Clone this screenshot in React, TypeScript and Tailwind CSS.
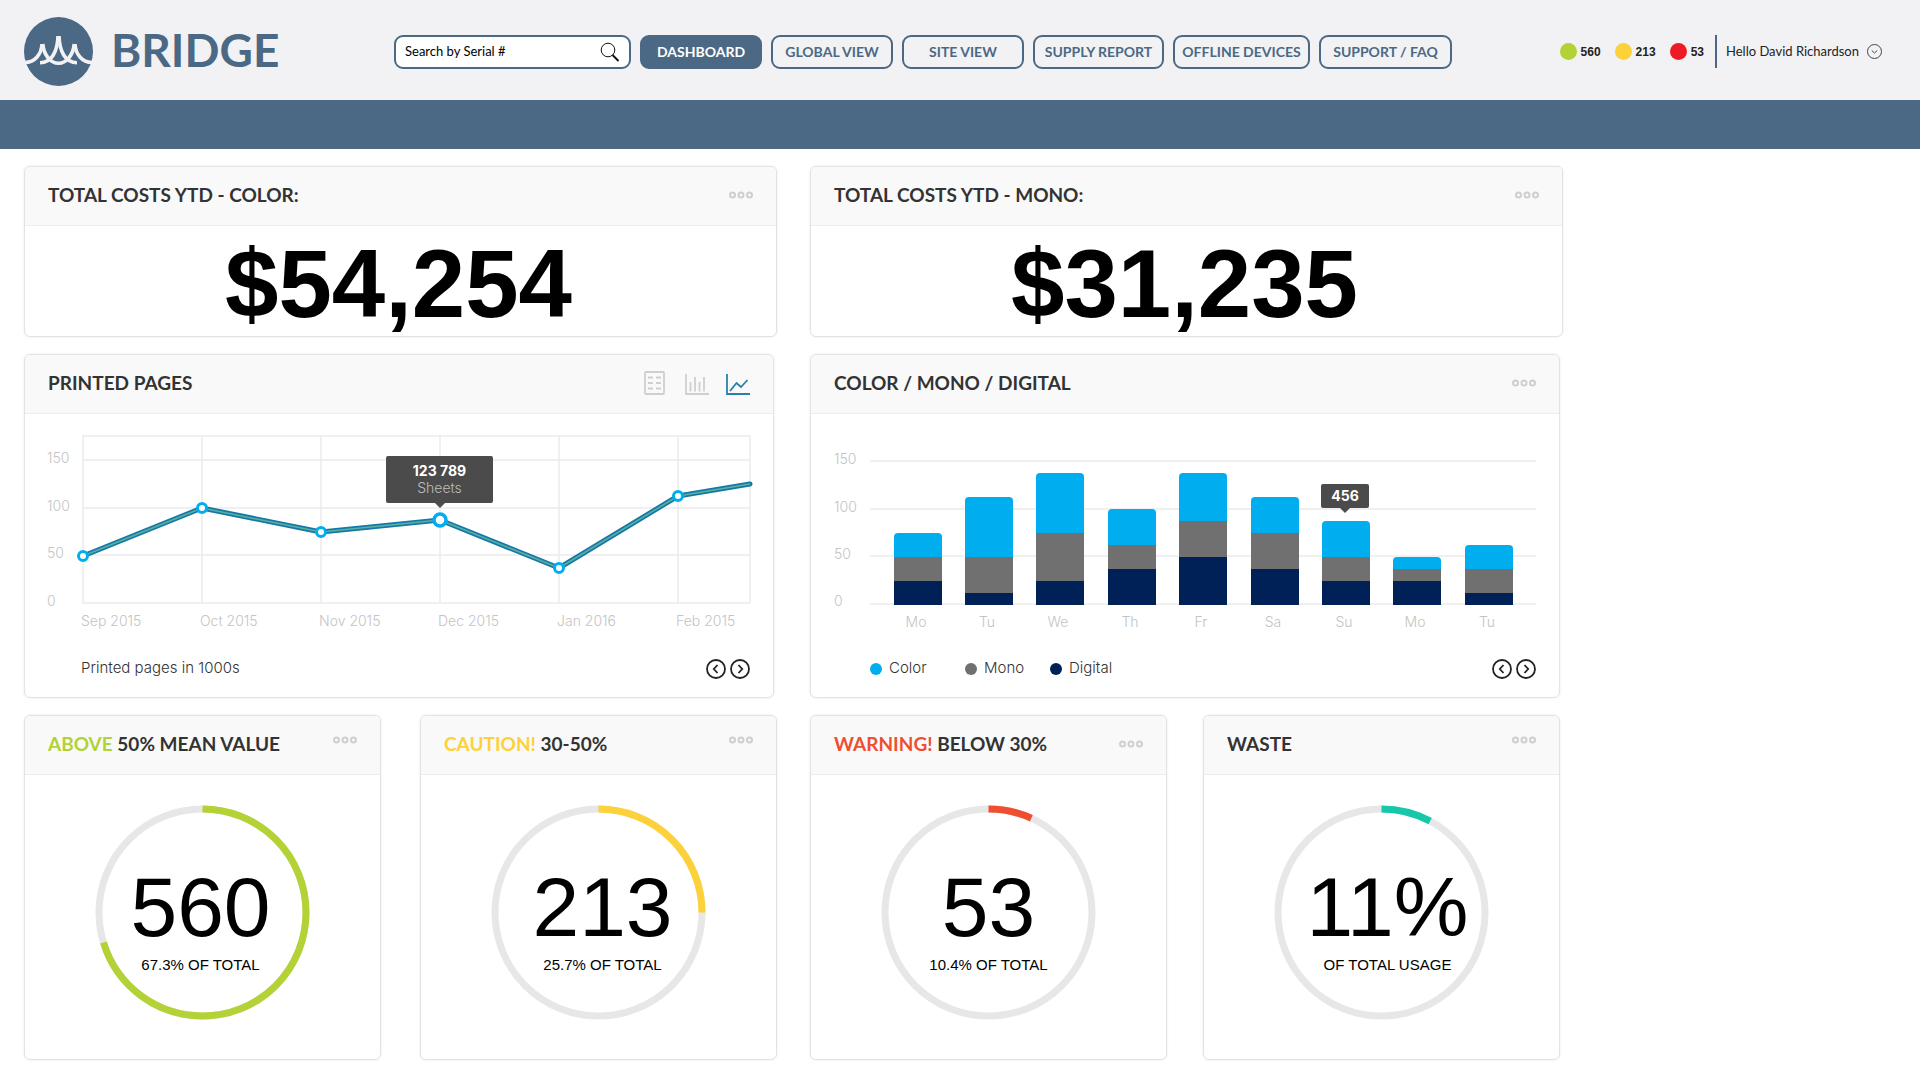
import React, { useState } from 'react'

const navItems = [
  { name: "DASHBOARD", width: "w-[122px]" },
  { name: "GLOBAL VIEW", width: "w-[122px]" },
  { name: "SITE VIEW", width: "w-[122px]" },
  { name: "SUPPLY REPORT", width: "w-[131px]" },
  { name: "OFFLINE DEVICES", width: "w-[137px]" },
  { name: "SUPPORT / FAQ", width: "w-[133px]" },
];

const statuses = [
  { value: "560", color: "bg-[#b2d235]" },
  { value: "213", color: "bg-[#fdd13a]" },
  { value: "53", color: "bg-[#ed1c24]" },
];

const points = [
  { x: 58, y: 142 },
  { x: 177, y: 94 },
  { x: 296, y: 118 },
  { x: 415, y: 106, active: true },
  { x: 534, y: 154 },
  { x: 653, y: 82 },
];

const months = ["Sep 2015", "Oct 2015", "Nov 2015", "Dec 2015", "Jan 2016", "Feb 2015"];

// each step is 12.5 on the axis
const bars = [
  { day: "Mo", digital: 2, mono: 2, color: 2 },
  { day: "Tu", digital: 1, mono: 3, color: 5 },
  { day: "We", digital: 2, mono: 4, color: 5 },
  { day: "Th", digital: 3, mono: 2, color: 3 },
  { day: "Fr", digital: 4, mono: 3, color: 4 },
  { day: "Sa", digital: 3, mono: 3, color: 3 },
  { day: "Su", digital: 2, mono: 2, color: 3 },
  { day: "Mo", digital: 2, mono: 1, color: 1 },
  { day: "Tu", digital: 1, mono: 2, color: 2 },
];

function Logo() {
  return (
    <svg width="69" height="69" viewBox="0 0 69 69" aria-hidden="true">
      <circle cx="34.5" cy="34.5" r="34.5" fill="#4b6984" />
      <g fill="none" stroke="#f2f2f4" strokeWidth="3.6">
        <path d="M18 27C17.5 37 11 45.5 1 45.5" />
        <path d="M18.8 27C19.5 37 26 46.3 34.5 46.3C43 46.3 49.5 37 50.2 27" />
        <path d="M34 19C33.5 34 28 45.7 16 45.7" />
        <path d="M35 19C35.5 34 41 45.7 53 45.7" />
        <path d="M51 27C51.5 37 58 45.5 68 45.5" />
      </g>
    </svg>
  )
}

function Dots({ raised }: { raised?: boolean }) {
  return (
    <button type="button" aria-label="More options" className={raised ? "pb-2 cursor-pointer" : "cursor-pointer"}>
      <svg width="24" height="8" viewBox="0 0 24 8" fill="none" stroke="#cfcfcf" strokeWidth="2">
        <circle cx="3.5" cy="4" r="2.5" />
        <circle cx="12" cy="4" r="2.5" />
        <circle cx="20.5" cy="4" r="2.5" />
      </svg>
    </button>
  )
}

function Card({ title, actions, className, children }: {
  title: React.ReactNode,
  actions: React.ReactNode,
  className?: string,
  children: React.ReactNode
}) {
  return (
    <section className={"rounded-md border border-[#e3e3e3] bg-white shadow-[0_0_3px_rgba(0,0,0,0.08)] overflow-hidden " + (className || "")}>
      <header className="h-[59px] flex items-center justify-between pl-[23px] pr-[23px] pb-[2px] bg-[#f9f9f9] border-b border-[#ededed]">
        <h2 className="font-['Lato',sans-serif] text-[19px] font-bold text-[#333]">{title}</h2>
        {actions}
      </header>
      {children}
    </section>
  )
}

function Pager() {
  return (
    <div className="flex gap-1">
      <button type="button" aria-label="Previous" className="cursor-pointer">
        <svg width="20" height="20" viewBox="0 0 20 20" fill="none" stroke="#222" strokeWidth="1.8">
          <circle cx="10" cy="10" r="9" />
          <path d="M11.5 6L7.8 10L11.5 14" />
        </svg>
      </button>
      <button type="button" aria-label="Next" className="cursor-pointer">
        <svg width="20" height="20" viewBox="0 0 20 20" fill="none" stroke="#222" strokeWidth="1.8">
          <circle cx="10" cy="10" r="9" />
          <path d="M8.5 6L12.2 10L8.5 14" />
        </svg>
      </button>
    </div>
  )
}

function ChartIcons() {
  return (
    <div className="flex items-end gap-[17px]">
      <button type="button" aria-label="Table" className="mr-[3px] cursor-pointer">
        <svg width="21" height="24" viewBox="0 0 21 24" fill="none" stroke="#cfcfcf" strokeWidth="1.8">
          <rect x="1" y="1" width="19" height="22" rx="1" />
          <path d="M4 6.5H9M12 6.5H17M4 12H9M12 12H17M4 17.5H9M12 17.5H17" />
        </svg>
      </button>
      <button type="button" aria-label="Bar chart" className="cursor-pointer">
        <svg width="24" height="21" viewBox="0 0 24 21" fill="none" stroke="#cfcfcf" strokeWidth="1.8">
          <path d="M1 0V20H24" />
          <path d="M5.5 8V17.5M10 3V17.5M14.5 8V17.5M19 3V17.5" />
        </svg>
      </button>
      <button type="button" aria-label="Line chart" className="cursor-pointer">
        <svg width="24" height="21" viewBox="0 0 24 21" fill="none" stroke="#2a80a8" strokeWidth="1.8">
          <path d="M1 0V20H24" />
          <path d="M4 17L10.5 9L15 13L21.5 6" />
        </svg>
      </button>
    </div>
  )
}

function LineChart() {
  const line = points.map((p) => p.x + "," + p.y).join(" ") + " 725,70";
  return (
    <svg viewBox="0 0 748 230" className="block w-full h-auto font-['Inter',sans-serif] text-[14px] font-light">
      <g stroke="#ebebeb" strokeWidth="1.5" fill="none">
        <rect x="58" y="22" width="667" height="167" />
        <path d="M58 46H725M58 94H725M58 141H725" />
        <path d="M177 22V189M296 22V189M415 22V189M534 22V189M653 22V189" />
      </g>
      <g fill="#c4c4c4">
        <text x="22" y="49">150</text>
        <text x="22" y="97">100</text>
        <text x="22" y="144">50</text>
        <text x="22" y="192">0</text>
        {months.map((m, i) => (
          <text key={m} x={56 + i * 119} y="212">{m}</text>
        ))}
      </g>
      <polyline points={line} fill="none" stroke="#1579a8" strokeWidth="5" strokeLinecap="round" strokeLinejoin="round" />
      <polyline points={line} fill="none" stroke="#5bb0a0" strokeWidth="1.5" strokeLinejoin="round" />
      {points.map((p) => (
        <circle key={p.x} cx={p.x} cy={p.y} r={p.active ? 6 : 4.5} fill="#fff" stroke="#00aeef" strokeWidth={p.active ? 3.5 : 3} />
      ))}
      <rect x="361" y="42" width="107" height="47" rx="2" fill="#4b4b4b" />
      <path d="M410 89H420L415 94Z" fill="#4b4b4b" />
      <text x="414.5" y="62" textAnchor="middle" fill="#fff" className="font-bold">123 789</text>
      <text x="414.5" y="79" textAnchor="middle" fill="#bdbdbd">Sheets</text>
    </svg>
  )
}

function BarChart() {
  const step = 12;
  const bottom = 191;
  return (
    <svg viewBox="0 0 748 230" className="block w-full h-auto font-['Inter',sans-serif] text-[14px] font-light">
      <path d="M59 47H725M59 95H725M59 142H725M59 190H725" stroke="#ebebeb" strokeWidth="1.5" />
      <g fill="#c4c4c4">
        <text x="23" y="50">150</text>
        <text x="23" y="98">100</text>
        <text x="23" y="145">50</text>
        <text x="23" y="192">0</text>
      </g>
      {bars.map((b, i) => {
        const x = Math.round(82.5 + i * 71.4);
        const digitalTop = bottom - b.digital * step;
        const monoTop = digitalTop - b.mono * step;
        const colorTop = monoTop - b.color * step;
        return (
          <g key={i}>
            <path d={`M${x} ${monoTop}V${colorTop + 4}q0 -4 4 -4h40q4 0 4 4V${monoTop}Z`} fill="#00aeef" />
            <rect x={x} y={monoTop} width="48" height={digitalTop - monoTop} fill="#707070" />
            <rect x={x} y={digitalTop} width="48" height={bottom - digitalTop} fill="#002157" />
            <text x={x + 22} y="213" textAnchor="middle" fill="#c4c4c4">{b.day}</text>
          </g>
        )
      })}
      <rect x="510" y="70" width="48" height="24" rx="2" fill="#4b4b4b" />
      <path d="M529 94H539L534 99Z" fill="#4b4b4b" />
      <text x="534" y="87" textAnchor="middle" fill="#fff" className="font-bold">456</text>
    </svg>
  )
}

function Gauge({ value, caption, percent, color, shift }: {
  value: string,
  caption: string,
  percent: number,
  color: string,
  shift?: string
}) {
  return (
    <div className="grid place-items-center pt-[30px] pb-[39px]">
      <svg width="215" height="215" viewBox="0 0 215 215" className="col-start-1 row-start-1" fill="none" strokeWidth="7">
        <circle cx="107.5" cy="107.5" r="103.5" stroke="#e7e7e7" />
        <circle cx="107.5" cy="107.5" r="103.5" stroke={color} pathLength="100" strokeDasharray={percent + " 100"} transform="rotate(-90 107.5 107.5)" />
      </svg>
      <div className={"col-start-1 row-start-1 text-center text-black font-['Liberation_Sans',Arial,sans-serif] pt-2 " + (shift || "")}>
        <p className="text-[84px] leading-[96px]">{value}</p>
        <p className="text-[15px] leading-5">{caption}</p>
      </div>
    </div>
  )
}

export default function App() {
  const [search, setSearch] = useState("");
  const [active, setActive] = useState("DASHBOARD");

  return (
    <div className="min-h-screen bg-white">
      <header className="h-[100px] pt-[3px] pl-6 pr-[38px] flex items-center bg-[#f2f2f4] font-['Lato',sans-serif]">
        <a href="#" className="w-[370px] shrink-0 flex items-center gap-[18px]">
          <Logo />
          <span className="pb-[3px] text-[46px] leading-[48px] font-bold text-[#4b6984]">BRIDGE</span>
        </a>
        <form className="shrink-0 w-[237px] h-[34px] flex items-center rounded-[9px] border-2 border-[#4b6984] bg-white px-[9px]" onSubmit={(e) => e.preventDefault()}>
          <input
            type="text"
            aria-label="Search by Serial #"
            placeholder="Search by Serial #"
            value={search}
            onChange={(e) => setSearch(e.target.value)}
            className="min-w-0 flex-1 text-[13px] outline-none placeholder:text-black"
          />
          <button type="submit" aria-label="Search" className="cursor-pointer">
            <svg width="20" height="20" viewBox="0 0 20 20" fill="none" stroke="#111">
              <circle cx="8" cy="8" r="6.8" />
              <path d="M12.5 13L18.5 19" strokeWidth="2" />
            </svg>
          </button>
        </form>
        <nav className="flex gap-[9px] ml-[9px]">
          {navItems.map((item) => (
            <a
              key={item.name}
              href="#"
              onClick={() => setActive(item.name)}
              className={"h-[34px] flex items-center justify-center whitespace-nowrap rounded-[9px] border-2 border-[#4b6984] text-[14px] font-bold " + item.width + (active === item.name ? " bg-[#4b6984] text-white" : " text-[#4b6984]")}
            >
              {item.name}
            </a>
          ))}
        </nav>
        <div className="ml-auto flex items-center">
          <ul className="flex items-center gap-[14px] font-['Liberation_Sans',Arial,sans-serif] text-[12px] font-bold text-[#222]">
            {statuses.map((s) => (
              <li key={s.value} className="flex items-center gap-1">
                <span className={"size-[17px] rounded-full " + s.color}></span>
                {s.value}
              </li>
            ))}
          </ul>
          <button type="button" className="ml-[11px] h-[33px] border-l-2 border-[#4b6984] pl-[9px] flex items-center gap-2 text-[13px] text-[#222] whitespace-nowrap cursor-pointer">
            Hello David Richardson
            <svg width="15" height="15" viewBox="0 0 15 15" fill="none" stroke="#444">
              <circle cx="7.5" cy="7.5" r="7" />
              <path d="M4.8 6.5L7.5 9L10.2 6.5" />
            </svg>
          </button>
        </div>
      </header>
      <div className="h-[49px] bg-[#4b6984]"></div>

      <main className="max-w-[1563px] pl-6 pt-[17px] pb-5 flex flex-col gap-[17px]">
        <div className="grid grid-cols-2 gap-[33px]">
          <Card title="TOTAL COSTS YTD - COLOR:" actions={<Dots />}>
            <p className="pt-[6px] pr-1 text-center font-['Liberation_Sans',Arial,sans-serif] text-[96px] leading-[104px] font-bold text-black">$54,254</p>
          </Card>
          <Card title="TOTAL COSTS YTD - MONO:" actions={<Dots />}>
            <p className="pt-[6px] pr-1 text-center font-['Liberation_Sans',Arial,sans-serif] text-[96px] leading-[104px] font-bold text-black">$31,235</p>
          </Card>
        </div>

        <div className="grid grid-cols-2 gap-[33px]">
          <Card title="PRINTED PAGES" actions={<ChartIcons />} className="mr-[3px]">
            <LineChart />
            <div className="h-[53px] pl-14 pr-[23px] pb-1 flex items-center justify-between font-['Inter',sans-serif] text-[15px] font-light text-[#333]">
              Printed pages in 1000s
              <Pager />
            </div>
          </Card>
          <Card title="COLOR / MONO / DIGITAL" actions={<Dots />} className="mr-[3px]">
            <BarChart />
            <div className="h-[53px] pl-[59px] pr-[23px] pb-1 flex items-center justify-between font-['Inter',sans-serif] text-[15px] font-light text-[#333]">
              <ul className="flex items-center">
                <li className="flex items-center gap-[7px] w-[95px]"><span className="size-3 rounded-full bg-[#00aeef]"></span>Color</li>
                <li className="flex items-center gap-[7px] w-[85px]"><span className="size-3 rounded-full bg-[#707070]"></span>Mono</li>
                <li className="flex items-center gap-[7px]"><span className="size-3 rounded-full bg-[#002157]"></span>Digital</li>
              </ul>
              <Pager />
            </div>
          </Card>
        </div>

        <div className="grid grid-cols-2 gap-[33px]">
          <div className="grid grid-cols-2 gap-[39px]">
            <Card title={<><span className="text-[#b2d235]">ABOVE</span> 50% MEAN VALUE</>} actions={<Dots raised />}>
              <Gauge value="560" caption="67.3% OF TOTAL" percent={70.3} color="#b2d235" shift="pr-1" />
            </Card>
            <Card title={<><span className="text-[#fdd13a]">CAUTION!</span> 30-50%</>} actions={<Dots raised />}>
              <Gauge value="213" caption="25.7% OF TOTAL" percent={25} color="#fdd13a" shift="pl-2" />
            </Card>
          </div>
          <div className="grid grid-cols-2 gap-9 mr-[3px]">
            <Card title={<><span className="text-[#f04e30]">WARNING!</span> BELOW 30%</>} actions={<Dots />}>
              <Gauge value="53" caption="10.4% OF TOTAL" percent={6.8} color="#f04e30" />
            </Card>
            <Card title="WASTE" actions={<Dots raised />}>
              <Gauge value="11%" caption="OF TOTAL USAGE" percent={7.8} color="#15c8aa" shift="pl-3" />
            </Card>
          </div>
        </div>
      </main>
    </div>
  )
}
